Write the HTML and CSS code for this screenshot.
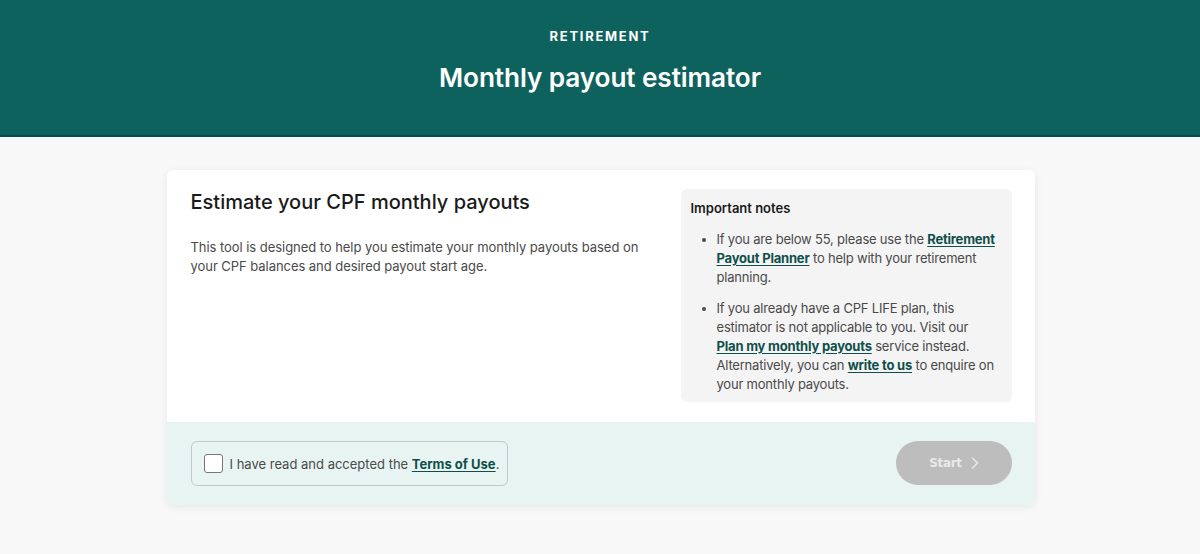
FILE: index.html
```html
<!DOCTYPE html>
<html lang="en">
<head>
<meta charset="utf-8">
<title>Monthly payout estimator</title>
<link rel="stylesheet" href="styles.css">
</head>
<body>
<header class="hero">
  <div class="eyebrow">RETIREMENT</div>
  <h1 class="hero-title">Monthly payout estimator</h1>
</header>
<main class="page">
  <section class="card">
    <div class="card-body">
      <div class="intro">
        <h2 class="intro-title">Estimate your CPF monthly payouts</h2>
        <p class="intro-text">This tool is designed to help you estimate your monthly payouts based on your CPF balances and desired payout start age.</p>
      </div>
      <aside class="notes">
        <h3 class="notes-title">Important notes</h3>
        <ul class="notes-list">
          <li>If you are below 55, please use the <a href="#">Retirement Payout Planner</a> to help with your retirement planning.</li>
          <li>If you already have a CPF LIFE plan, this estimator is not applicable to you. Visit our <a class="nowrap" href="#">Plan my monthly payouts</a> service instead. Alternatively, you can <a class="nowrap" href="#">write to us</a> to enquire on your monthly payouts.</li>
        </ul>
      </aside>
    </div>
    <div class="card-footer">
      <label class="consent">
        <span class="checkbox"></span>
        <span class="consent-text">I have read and accepted the <a href="#">Terms of Use</a>.</span>
      </label>
      <button class="start" type="button">Start
        <svg class="chev" width="10" height="14" viewBox="0 0 10 14"><path d="M2.5 2 L7.5 7 L2.5 12" fill="none" stroke="currentColor" stroke-width="1.6" stroke-linecap="round" stroke-linejoin="round"/></svg>
      </button>
    </div>
  </section>
</main>
</body>
</html>
```
FILE: styles.css
```css
* { box-sizing: border-box; }
html, body { margin: 0; padding: 0; }
body {
  background: #f8f8f8;
  font-family: Inter, "Noto Sans", sans-serif;
  color: #222;
  height: 554px;
  overflow: hidden;
}
.hero {
  background: #0e625e;
  height: 137px;
  border-bottom: 2px solid #0a4a47;
  text-align: center;
  color: #fff;
  padding-top: 28px;
}
.eyebrow {
  font-size: 13px;
  font-weight: 700;
  letter-spacing: 1.7px;
  line-height: 16px;
}
.hero-title {
  margin: 18px 0 0;
  font-size: 26.2px;
  font-weight: 600;
  line-height: 32px;
  letter-spacing: -0.1px;
}
.page {
  padding: 33px 0 0 1px;
}
.card {
  width: 868px;
  margin: 0 auto;
  background: #fff;
  border-radius: 6px;
  box-shadow: 0 2px 8px rgba(0,0,0,0.07);
  overflow: hidden;
}
.card-body {
  display: flex;
  gap: 40px;
  padding: 19px 23px 20px 24px;
}
.intro { flex: 1; }
.intro-title {
  margin: 0;
  padding-top: 1px;
  font-size: 20px;
  font-weight: 500;
  line-height: 24px;
  color: #1a1a1a;
}
.intro-text {
  margin: 24px 0 0;
  font-size: 13px;
  line-height: 19px;
  color: #4a4a4a;
  letter-spacing: -0.05px;
}
.notes {
  width: 331px;
  flex: none;
  background: #f4f4f4;
  border-radius: 6px;
  padding: 10px 3px 8px 10px;
}
.notes-title {
  margin: 0;
  font-size: 13px;
  font-weight: 600;
  line-height: 19px;
  color: #1a1a1a;
}
.notes-list {
  margin: 12px 0 0;
  padding-left: 26px;
  font-size: 13px;
  line-height: 19px;
  color: #4a4a4a;
  letter-spacing: -0.2px;
}
.notes-list li + li { margin-top: 12px; }
a {
  color: #0f4f4b;
  font-weight: 700;
  text-decoration: underline;
  text-underline-offset: 2px;
}
.nowrap { white-space: nowrap; }
.card-footer {
  background: #e7f4f1;
  display: flex;
  justify-content: space-between;
  align-items: flex-start;
  padding: 19px 23px 19px 24px;
}
.consent {
  display: flex;
  align-items: center;
  width: 317px;
  height: 45px;
  border: 1px solid #b7cdca;
  border-radius: 6px;
  padding-left: 12px;
  gap: 7px;
}
.checkbox {
  width: 19px;
  height: 19px;
  border: 1px solid #777;
  border-radius: 3px;
  background: #fff;
  flex: none;
}
.consent-text {
  font-size: 13px;
  color: #4a4a4a;
}
.start {
  width: 116px;
  height: 44px;
  border: none;
  border-radius: 22px;
  background: #bdbdbd;
  color: #e9e9e9;
  font-family: "DejaVu Sans", Verdana, sans-serif;
  font-weight: 700;
  font-size: 12px;
  letter-spacing: -0.3px;
  display: flex;
  align-items: center;
  justify-content: center;
  gap: 8px;
  padding: 0 0 0 2px;
}
.chev { display: block; }
```
